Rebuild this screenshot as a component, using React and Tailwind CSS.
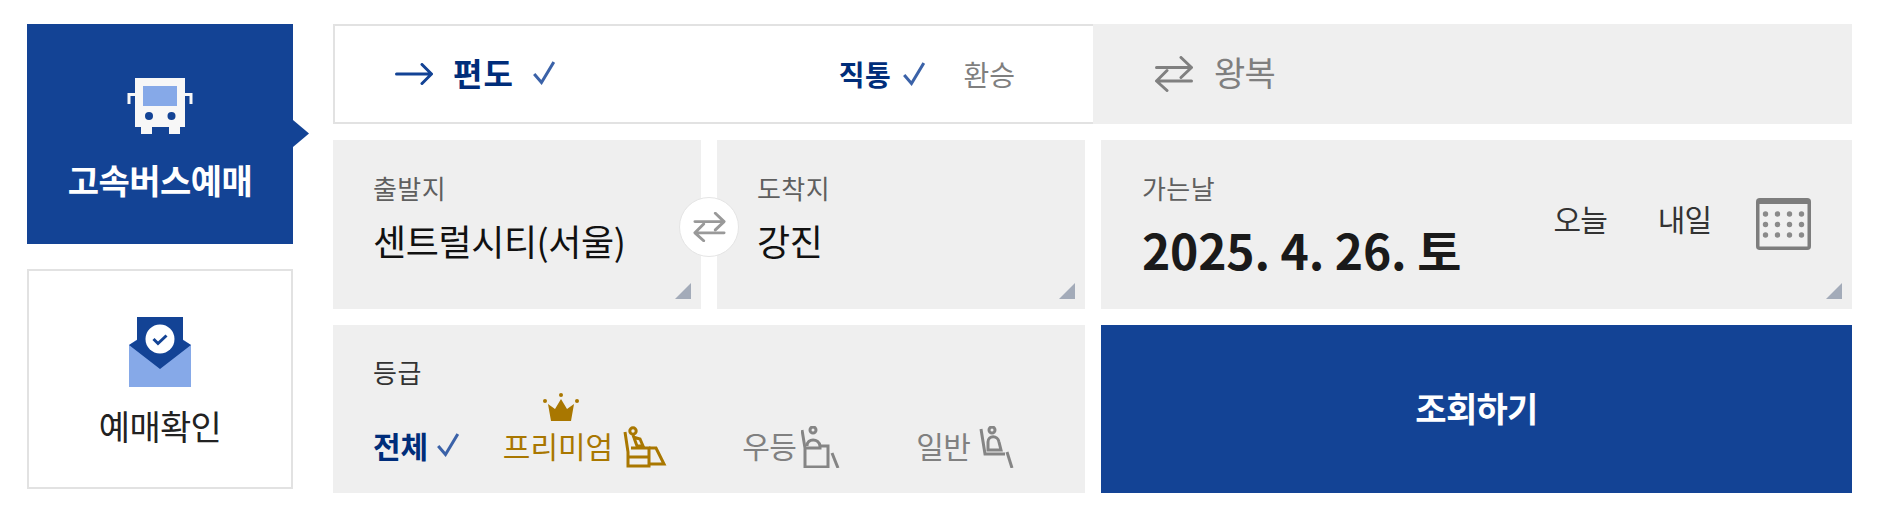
// App.jsx
const font = { fontFamily: '"Noto Sans CJK KR", "Noto Sans", sans-serif' };

function Check({ className }) {
  return (
    <svg viewBox="0 0 22 24" className={className} fill="none" stroke="#3b62a8" strokeWidth="3">
      <path d="M1.2 13 L8.5 21.5 L20.8 1" />
    </svg>
  );
}

function SwapIcon({ className, color = "#808080", width = "3" }) {
  return (
    <svg viewBox="0 0 38 36" className={className} fill="none" stroke={color} strokeWidth={width} strokeLinecap="round" strokeLinejoin="round">
      <path d="M1.5 11.5 H36 M26 1.5 L36.5 11.5 L26 21.5" />
      <path d="M36.5 25 H2 M12 14.5 L1.5 25 L12 34.5" />
    </svg>
  );
}

function Corner() {
  return <div className="absolute right-[10px] bottom-[10px] w-4 h-4 bg-[#a3abb9] [clip-path:polygon(100%_0,100%_100%,0_100%)]" />;
}

function BusIcon() {
  return (
    <svg width="66" height="58" viewBox="0 0 66 58">
      <path d="M8 16.5 H2 V26" fill="none" stroke="#f7f7f7" strokeWidth="3" />
      <path d="M58 16.5 H64 V26" fill="none" stroke="#f7f7f7" strokeWidth="3" />
      <rect x="8" y="0" width="50" height="49" fill="#f7f7f7" />
      <rect x="14" y="49" width="11" height="7" fill="#f7f7f7" />
      <rect x="42" y="49" width="11" height="7" fill="#f7f7f7" />
      <rect x="16" y="8" width="34" height="20" fill="#86a9e8" />
      <circle cx="22" cy="38" r="4" fill="#134395" />
      <circle cx="44.5" cy="38" r="4" fill="#134395" />
    </svg>
  );
}

function MailIcon() {
  return (
    <svg width="62" height="72" viewBox="0 0 62 72">
      <path d="M0 29 L31 8 L62 29 V71 H0 Z" fill="#86a9e8" />
      <path d="M0 29 L8 24 V1 H54 V24 L62 29 L31 53 Z" fill="#134395" />
      <circle cx="31" cy="23" r="14.5" fill="#fff" />
      <path d="M24.5 23 L29 27.5 L37.5 19.5" fill="none" stroke="#134395" strokeWidth="3" />
    </svg>
  );
}

function CalendarIcon() {
  const dots = [];
  for (let r = 0; r < 3; r++) {
    for (let c = 0; c < 4; c++) {
      dots.push(<circle key={r + "-" + c} cx={9.5 + c * 12} cy={16 + r * 10.5} r="2.7" fill="#8a8a8a" />);
    }
  }
  return (
    <svg width="55" height="52" viewBox="0 0 55 52">
      <rect x="1.75" y="1.75" width="51.5" height="48.5" rx="2" fill="#f0f0f0" stroke="#7d7d7d" strokeWidth="3.5" />
      <rect x="1" y="1" width="53" height="5" fill="#7d7d7d" />
      {dots}
    </svg>
  );
}

function Crown() {
  return (
    <svg width="36" height="28" viewBox="0 0 36 28" fill="#a97700">
      <path d="M5 11 L12 16 L18 6 L24 16 L31 11 L28 28 H8 Z" />
      <circle cx="2" cy="8" r="2" />
      <circle cx="18" cy="2" r="2" />
      <circle cx="34" cy="8" r="2" />
    </svg>
  );
}

function PremiumSeat() {
  return (
    <svg width="44" height="42" viewBox="0 0 44 42" fill="none" stroke="#a97700" strokeWidth="3">
      <path d="M2 6 L5 26 V40 H26 V22 H8" />
      <circle cx="10" cy="5" r="3.2" />
      <path d="M10 9 L14 20 H20 L17 13 L10 11" />
      <path d="M5 31 H26 M26 22 H33 L41 38 H26" />
    </svg>
  );
}

function MiddleSeat() {
  return (
    <svg width="40" height="42" viewBox="0 0 40 42" fill="none" stroke="#858585" strokeWidth="3">
      <path d="M1 4 L4 22 V41 H27 V20 H20" />
      <circle cx="12" cy="4" r="3" />
      <path d="M6 20 C6 12 18 12 19 20 V22 H4" />
      <path d="M31 27 L37 42" />
    </svg>
  );
}

function NormalSeat() {
  return (
    <svg width="36" height="42" viewBox="0 0 36 42" fill="none" stroke="#858585" strokeWidth="3">
      <path d="M2 3 L6 28 H26" />
      <circle cx="13" cy="4" r="3" />
      <path d="M9 24 V16 C9 9 19 9 20 16 L22 24 Z" />
      <path d="M28 26 L33 42" />
    </svg>
  );
}

export default function App() {
  return (
    <div className="w-[1880px] h-[518px] bg-white flex pl-[27px] pt-[24px] gap-[40px]" style={font}>
      {/* 왼쪽 메뉴 */}
      <div className="w-[266px] flex flex-col gap-[25px]">
        <div className="relative h-[220px] bg-[#134395] flex flex-col items-center pt-[54px]">
          <BusIcon />
          <div className="mt-[20px] text-[34px] leading-[48px] font-bold text-white tracking-[-0.5px]">고속버스예매</div>
          <div className="absolute left-full top-[96px] w-4 h-[27px] bg-[#134395] [clip-path:polygon(0_0,100%_50%,0_100%)]" />
        </div>
        <div className="h-[220px] border-2 border-[#e2e2e2] flex flex-col items-center pt-[45px]">
          <MailIcon />
          <div className="mt-[14px] text-[34px] leading-[48px] text-[#222] tracking-[-0.7px]">예매확인</div>
        </div>
      </div>

      {/* 오른쪽 폼 */}
      <div className="w-[1519px] flex flex-col gap-[16px]">
        <div className="h-[100px] flex">
          <div className="w-[760px] border-2 border-r-0 border-[#e2e2e2] flex items-center justify-between pl-[60px] pr-[78px]">
            <div className="flex items-center">
              <svg width="38" height="22" viewBox="0 0 38 22" fill="none" stroke="#134395" strokeWidth="3" strokeLinecap="round" strokeLinejoin="round">
                <path d="M1.5 11 H36 M27 1.5 L36.5 11 L27 20.5" />
              </svg>
              <span className="ml-[20px] text-[32px] font-bold text-[#002d7a] tracking-[1px] -mt-[4px]">편도</span>
              <Check className="ml-[19px] w-[22px] h-[24px] -mt-[2px]" />
            </div>
            <div className="flex items-center">
              <span className="text-[28px] font-bold text-[#002d7a] tracking-[0.6px]">직통</span>
              <Check className="ml-[12px] w-[22px] h-[24px]" />
              <span className="ml-[38px] text-[28px] text-[#7f7f7f]">환승</span>
            </div>
          </div>
          <div className="flex-1 bg-[#efefef] flex items-center pl-[62px]">
            <SwapIcon className="w-[38px] h-[36px]" />
            <span className="ml-[21px] text-[34px] text-[#7f7f7f] tracking-[-0.7px] -mt-[6px]">왕복</span>
          </div>
        </div>

        <div className="h-[169px] flex gap-[16px]">
          <div className="relative w-[368px] bg-[#efefef] pl-[40px] pt-[30px]">
            <div className="text-[26px] leading-[36px] text-[#5f5f5f] tracking-[0.4px]">출발지</div>
            <div className="mt-[9px] text-[36px] leading-[50px] text-[#111] tracking-[-0.4px] whitespace-nowrap">센트럴시티(서울)</div>
            <Corner />
            <div className="absolute left-[346px] top-[57px] w-[60px] h-[60px] z-10 rounded-full bg-white border border-[#e5e5e5] flex items-center justify-center">
              <SwapIcon className="w-[33px] h-[30px]" color="#999999" width="3.5" />
            </div>
          </div>
          <div className="relative w-[368px] bg-[#efefef] pl-[40px] pt-[30px]">
            <div className="text-[26px] leading-[36px] text-[#5f5f5f] tracking-[0.4px]">도착지</div>
            <div className="mt-[9px] text-[36px] leading-[50px] text-[#111] tracking-[-0.4px]">강진</div>
            <Corner />
          </div>
          <div className="relative flex-1 bg-[#efefef] pl-[41px] pt-[30px] flex justify-between">
            <div>
              <div className="text-[26px] leading-[36px] text-[#5f5f5f] tracking-[0.4px]">가는날</div>
              <div className="mt-[13px] text-[48px] leading-[60px] font-bold text-[#1a1a1a] tracking-[-0.2px] whitespace-nowrap">2025. 4. 26. 토</div>
            </div>
            <div className="flex items-start pt-[28px] pr-[41px]">
              <span className="-mt-[1px] text-[30px] leading-[42px] text-[#333] tracking-[-1px]">오늘</span>
              <span className="ml-[51px] -mt-[1px] text-[30px] leading-[42px] text-[#333] tracking-[-1px]">내일</span>
              <div className="ml-[45px]"><CalendarIcon /></div>
            </div>
            <Corner />
          </div>
        </div>

        <div className="h-[168px] flex gap-[16px]">
          <div className="w-[752px] bg-[#efefef] pl-[40px] pt-[29px]">
            <div className="text-[26px] leading-[36px] text-[#333] tracking-[0.6px]">등급</div>
            <div className="flex items-end mt-[13px] h-[65px]">
              <div className="flex items-center pb-[2px]">
                <span className="text-[30px] leading-[42px] font-bold text-[#002d7a] tracking-[-0.2px]">전체</span>
                <Check className="ml-[9px] w-[22px] h-[24px]" />
              </div>
              <div className="relative flex items-end ml-[44px]">
                <span className="text-[30px] leading-[42px] pb-[2px] text-[#a97700]">프리미엄</span>
                <div className="ml-[10px]"><PremiumSeat /></div>
                <div className="absolute left-[40px] -top-[31px]"><Crown /></div>
              </div>
              <div className="flex items-end ml-[75px]">
                <span className="text-[30px] leading-[42px] pb-[2px] text-[#808080] tracking-[-0.6px]">우등</span>
                <div className="ml-[5px]"><MiddleSeat /></div>
              </div>
              <div className="flex items-end ml-[75px]">
                <span className="text-[30px] leading-[42px] pb-[2px] text-[#808080] tracking-[-0.6px]">일반</span>
                <div className="ml-[9px]"><NormalSeat /></div>
              </div>
            </div>
          </div>
          <button className="flex-1 bg-[#134395] text-white text-[34px] font-bold tracking-[-0.7px] flex items-center justify-center pb-[4px]">조회하기</button>
        </div>
      </div>
    </div>
  );
}
